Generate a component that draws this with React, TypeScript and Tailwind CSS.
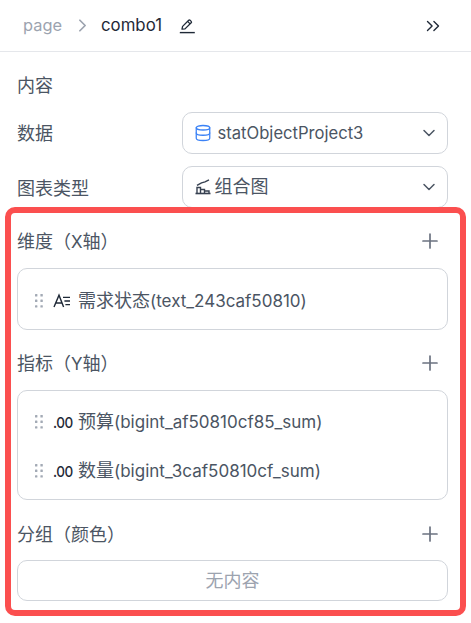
import { ChevronDown, ChevronRight, ChevronsRight, Database, Plus } from "lucide-react";

const FONT = "font-['Inter','Noto_Sans_CJK_SC',sans-serif]";

function GripDots() {
  return (
    <svg width="8" height="14" viewBox="0 0 8 14" className="shrink-0 text-[#a3aab5]" fill="currentColor">
      <rect x="0" y="0" width="2.4" height="2.4" rx="0.5" />
      <rect x="5.4" y="0" width="2.4" height="2.4" rx="0.5" />
      <rect x="0" y="5.6" width="2.4" height="2.4" rx="0.5" />
      <rect x="5.4" y="5.6" width="2.4" height="2.4" rx="0.5" />
      <rect x="0" y="11.2" width="2.4" height="2.4" rx="0.5" />
      <rect x="5.4" y="11.2" width="2.4" height="2.4" rx="0.5" />
    </svg>
  );
}

function PenLine() {
  return (
    <svg width="16" height="16" viewBox="0 0 16 16" fill="none" stroke="#1f2937" strokeWidth="1.3" className="shrink-0">
      <path d="M3 11.2 3.6 8.4 9.7 2.3a1 1 0 0 1 1.4 0l1.1 1.1a1 1 0 0 1 0 1.4L6 10.9z" strokeLinejoin="round" />
      <path d="M8.6 3.4 11.1 5.9" />
      <path d="M.8 14.6h15" strokeWidth="1.4" />
    </svg>
  );
}

function ComboIcon() {
  return (
    <svg width="16" height="16" viewBox="0 0 16 16" fill="none" stroke="#374151" strokeWidth="1.4" className="ml-[1px] shrink-0">
      <path d="M0.5 14.5h15" strokeWidth="1.6" />
      <path d="M2 14V8.5h3.5V14M5.5 14v-3.5h4V14M9.5 14v-2h4.5V14" />
      <path d="M2 6.4 6.5 3.8 10 2.8 14 0.8" />
    </svg>
  );
}

function TextIcon() {
  return (
    <svg width="18" height="16" viewBox="0 0 18 16" fill="none" stroke="#1f2937" strokeWidth="1.4" className="shrink-0">
      <path d="M1 14 6 2.2 10.6 14M2.8 10h6.4" />
      <path d="M10 4.4h7M11.4 8h5.6M12.4 11.6h4.6" />
    </svg>
  );
}

function NumberIcon() {
  return (
    <span className="w-[20px] shrink-0 origin-left text-[15px] leading-none font-medium tracking-[-0.5px] text-[#1f2937] [transform:scaleX(0.9)]">
      .00
    </span>
  );
}

// CJK glyphs run at 18px, latin at about 17px
function Lat({ children }: { children: React.ReactNode }) {
  return <span className="text-[17px]">{children}</span>;
}

function SelectBox({ icon, label, gap }: { icon: React.ReactNode; label: React.ReactNode; gap: string }) {
  return (
    <div className="flex h-[42px] w-[266px] items-center rounded-[10px] border border-[#d1d5db] bg-white pl-[11px] pr-[8px]">
      <div className={`flex flex-1 items-center ${gap}`}>
        {icon}
        <span className="text-[18px] leading-none text-[#4b5563]">{label}</span>
      </div>
      <ChevronDown size={20} strokeWidth={1.8} className="text-[#4b5563]" />
    </div>
  );
}

function FieldRow({ icon, label, field }: { icon: React.ReactNode; label: string; field: string }) {
  return (
    <div className="flex items-center">
      <div className="w-[18px] shrink-0">
        <GripDots />
      </div>
      <div className="flex w-[25px] shrink-0 items-center">{icon}</div>
      <span className="text-[18px] leading-none whitespace-nowrap text-[#4b5563]">
        {label}
        <Lat>{field}</Lat>
      </span>
    </div>
  );
}

function Head({ title, axis, tail }: { title: string; axis?: string; tail?: string }) {
  return (
    <div className="flex h-[24px] items-center justify-between">
      <span className="pt-[2px] text-[18px] leading-none text-[#4b5563]">
        {title}
        {axis && <Lat>{axis}</Lat>}
        {tail}
      </span>
      <Plus size={24} strokeWidth={1.7} className="mr-[12px] text-[#6b7280]" />
    </div>
  );
}

export default function App() {
  return (
    <div className={`h-[623px] w-[471px] overflow-hidden bg-white ${FONT}`}>
      <header className="flex h-[52px] items-center border-b border-[#e5e7eb] pl-[23px] pr-[27px]">
        <span className="text-[16.4px] text-[#9ca3af]">page</span>
        <ChevronRight size={21} strokeWidth={2} className="ml-[10px] text-[#9ca3af]" />
        <span className="ml-[8px] text-[16.8px] text-[#1f2937]">combo1</span>
        <div className="ml-[17px]">
          <PenLine />
        </div>
        <ChevronsRight size={22} strokeWidth={1.5} className="ml-auto text-[#1f2937]" />
      </header>

      <div className="px-[17px] pt-[21px]">
        <div className="flex h-[24px] items-center pt-[2px] text-[18px] leading-none text-[#4b5563]">内容</div>
        <div className="mt-[15px] flex items-center justify-between pr-[6.5px]">
          <span className="pt-[2px] text-[18px] leading-none text-[#4b5563]">数据</span>
          <SelectBox
            gap="gap-[6px]"
            icon={<Database size={18} strokeWidth={1.7} className="text-[#3b82f6]" />}
            label={<span className="text-[16.6px]">statObjectProject3</span>}
          />
        </div>
        <div className="mt-[12px] flex items-center justify-between pr-[6.5px]">
          <span className="pt-[4px] text-[18px] leading-none text-[#4b5563]">图表类型</span>
          <SelectBox gap="gap-[4px]" icon={<ComboIcon />} label="组合图" />
        </div>
      </div>

      <section className="relative mx-[5px] -mt-[1px] h-[409px] rounded-[10px] border-[6px] border-[#fb4f4f] px-[6px] pt-[16px]">
        <Head title="维度（" axis="X" tail="轴）" />
        <div className="mt-[15px] flex h-[62px] w-[431px] items-center rounded-[10px] border border-[#d1d5db] pt-[3px] pl-[17px]">
          <FieldRow icon={<TextIcon />} label="需求状态" field="(text_243caf50810)" />
        </div>

        <div className="mt-[21px]">
          <Head title="指标（" axis="Y" tail="轴）" />
        </div>
        <div className="mt-[15px] flex h-[110px] w-[431px] flex-col justify-center gap-[31px] rounded-[10px] border border-[#d1d5db] pt-[3px] pl-[17px]">
          <FieldRow icon={<NumberIcon />} label="预算" field="(bigint_af50810cf85_sum)" />
          <FieldRow icon={<NumberIcon />} label="数量" field="(bigint_3caf50810cf_sum)" />
        </div>

        <div className="mt-[22px]">
          <Head title="分组（颜色）" />
        </div>
        <div className="mt-[14px] flex h-[41px] w-[431px] items-center justify-center rounded-[10px] border border-[#d1d5db] text-[18px] text-[#9ca3af]">
          无内容
        </div>
      </section>
    </div>
  );
}
